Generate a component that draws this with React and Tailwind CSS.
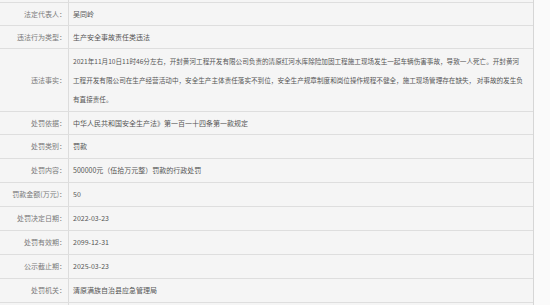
import React from "react";

const factLines = [
    "2021年11月10日11时46分左右，开封黄河工程开发有限公司负责的清原红河水库除险加固工程施工现场发生一起车辆伤害事故，导致一人死亡。开封黄河",
    "工程开发有限公司在生产经营活动中，安全生产主体责任落实不到位，安全生产规章制度和岗位操作规程不健全，施工现场管理存在缺失， 对事故的发生负",
    "有直接责任。",
];

const rows = [
    { label: "法定代表人：", value: "吴同岭", h: "h-[22px]" },
    { label: "违法行为类型：", value: "生产安全事故责任类违法", h: "h-[22px]" },
    { label: "违法事实：", lines: factLines, h: "h-[62px]" },
    { label: "处罚依据：", value: "中华人民共和国安全生产法》第一百一十四条第一款规定", h: "h-[22px]" },
    { label: "处罚类别：", value: "罚款", h: "h-[23px]" },
    { label: "处罚内容：", value: "500000元（伍拾万元整）罚款的行政处罚", h: "h-[23px]" },
    { label: "罚款金额(万元)：", value: "50", h: "h-[23px]" },
    { label: "处罚决定日期：", value: "2022-03-23", h: "h-[23px]" },
    { label: "处罚有效期：", value: "2099-12-31", h: "h-[23px]" },
    { label: "公示截止期：", value: "2025-03-23", h: "h-[23px]" },
    { label: "处罚机关：", value: "清原满族自治县应急管理局", h: "h-[23px]" },
    { label: "", value: "", h: "h-[23px]" },
];

const App = () => {
    return (
        <div
            className="w-[550px] h-[305px] overflow-hidden bg-[#fafafa] text-[7px] text-[#666]"
            style={{ fontFamily: '"Noto Sans CJK SC", "Noto Sans", sans-serif' }}
        >
            <div className="w-[534px] bg-[#f5f5f5] border-r border-[#d6d6d6]">
                {/* sliver of the row above */}
                <div className="flex h-[2px]">
                    <div className="w-[69px] border-r border-[#dcdcdc]" />
                </div>

                {rows.map((row, i) => (
                    <div key={i} className="flex border-t border-[#dedede]">
                        <div
                            className={`w-[69px] shrink-0 border-r border-[#dcdcdc] flex items-center justify-end pr-[2px] text-[#7a7a7a] ${row.h}`}
                        >
                            {row.label}
                        </div>
                        {row.lines ? (
                            <div className={`flex-1 flex flex-col justify-center pl-[4px] text-[#555] leading-[19px] ${row.h}`}>
                                {row.lines.map((line, j) => (
                                    <span key={j} className="whitespace-pre text-[6.6px]">{line}</span>
                                ))}
                            </div>
                        ) : (
                            <div className={`flex-1 flex items-center pl-[4px] text-[#555] ${row.h}`}>
                                <span>{row.value}</span>
                            </div>
                        )}
                    </div>
                ))}
            </div>
        </div>
    );
};

export default App;
